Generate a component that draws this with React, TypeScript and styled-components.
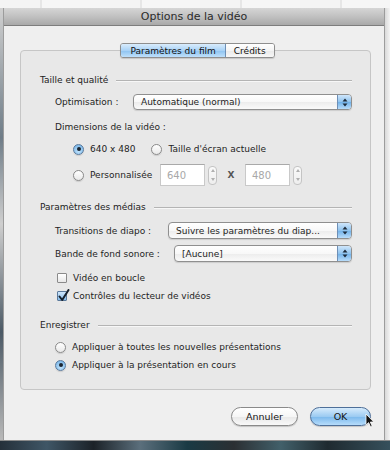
import React from "react";
import styled, { createGlobalStyle, css } from "styled-components";

const Global = createGlobalStyle`
  html, body { margin: 0; padding: 0; }
  body { font-family: "DejaVu Sans", "Liberation Sans", sans-serif; font-size: 9px; color: #1e1e1e; }
  * { box-sizing: border-box; }
`;

const Desktop = styled.div`
  position: relative;
  width: 390px;
  height: 450px;
  overflow: hidden;
  display: flex;
  flex-direction: column;
  background: #f2f2f2;
`;

const TopStrip = styled.div`
  height: 8px;
  flex: none;
  background: repeating-linear-gradient(90deg, #f4f4f4 0 40px, #e6e6e6 40px 42px, #f6f6f6 42px 100px);
`;

const MiddleRow = styled.div`
  display: flex;
  flex: 1;
`;

const LeftEdge = styled.div`
  width: 3px;
  flex: none;
  background: linear-gradient(180deg, #d0d0d0, #6f7d88 30%, #cfcfcf 50%, #4c5a66 75%, #b9b9b9);
`;

const RightEdge = styled.div`
  flex: 1;
  background: linear-gradient(90deg, #d9d9d9, #f4f4f4);
`;

const BottomStrip = styled.div`
  height: 10px;
  flex: none;
  background: linear-gradient(90deg, #25303a 0, #3f5666 12%, #1c2228 24%, #5b6f7c 36%, #1a3a44 48%, #2b2f33 60%, #42606a 72%, #1f2a30 84%, #36505c 100%);
  border-top: 1px solid #8a8a8a;
`;

const Window = styled.div`
  width: 382px;
  flex: none;
  display: flex;
  flex-direction: column;
  background: #efefef;
  border-left: 1px solid #9c9c9c;
  border-right: 1px solid #9c9c9c;
`;

const TitleBar = styled.div`
  height: 18px;
  flex: none;
  display: flex;
  align-items: center;
  justify-content: center;
  background: linear-gradient(180deg, #d6d6d6 0%, #c3c3c3 45%, #a9a9a9 100%);
  border-bottom: 1px solid #7d7d7d;
  font-family: "DejaVu Sans", "Liberation Sans", sans-serif;
  font-size: 11px;
  color: #2b2b2b;
`;

const Body = styled.div`
  flex: 1;
  display: flex;
  flex-direction: column;
  padding: 17px 13px 0 16px;
`;

const TabBar = styled.div`
  position: relative;
  z-index: 1;
  align-self: center;
  display: flex;
  height: 15px;
  margin-bottom: -8px;
  margin-left: 4px;
  border: 1px solid #8e8e8e;
  border-radius: 3px;
  overflow: hidden;
  box-shadow: 0 1px 1px rgba(0, 0, 0, 0.15);
`;

const Tab = styled.div<{ $active?: boolean }>`
  display: flex;
  align-items: center;
  padding: 0 8px;
  font-size: 9px;
  color: #111;
  ${(p) =>
    p.$active
      ? css`
          padding: 0 9px;
          background: linear-gradient(180deg, #d9ecfc 0%, #a9d2f6 50%, #8cc2f0 51%, #bfe0fb 100%);
          border-right: 1px solid #6d8fb5;
        `
      : css`
          background: linear-gradient(180deg, #ffffff 0%, #f4f4f4 50%, #e9e9e9 51%, #f7f7f7 100%);
        `}
`;

const GroupBox = styled.div`
  display: flex;
  flex-direction: column;
  background: #e8e8e8;
  border: 1px solid #c6c6c6;
  border-radius: 4px;
  padding: 22px 18px 17px 19px;
`;

const Row = styled.div<{ $h: number; $mt?: number; $indent?: number }>`
  display: flex;
  align-items: center;
  height: ${(p) => p.$h}px;
  margin-top: ${(p) => p.$mt ?? 0}px;
  padding-left: ${(p) => p.$indent ?? 0}px;
`;

const SectionTitle = styled.span`
  font-size: 9px;
  white-space: nowrap;
  color: #222;
`;

const Rule = styled.div`
  flex: 1;
  height: 1px;
  margin-left: 8px;
  background: #b4b4b4;
  box-shadow: 0 1px 0 #f7f7f7;
`;

const Label = styled.span<{ $w?: number }>`
  flex: none;
  width: ${(p) => (p.$w ? `${p.$w}px` : "auto")};
  white-space: nowrap;
`;

const Popup = styled.div`
  flex: 1;
  height: 100%;
  display: flex;
  align-items: stretch;
  border: 1px solid #8f8f8f;
  border-radius: 4px;
  overflow: hidden;
  background: linear-gradient(180deg, #ffffff 0%, #f8f8f8 50%, #ececec 51%, #fafafa 100%);
  box-shadow: 0 1px 1px rgba(0, 0, 0, 0.12);
`;

const PopupText = styled.span`
  flex: 1;
  display: flex;
  align-items: center;
  padding-left: 7px;
  white-space: nowrap;
  overflow: hidden;
`;

const PopupArrows = styled.span`
  width: 14px;
  flex: none;
  display: flex;
  align-items: center;
  justify-content: center;
  border-left: 1px solid #6e8fb6;
  background: linear-gradient(180deg, #cfe6fb 0%, #8fc3ee 50%, #6fb0e8 51%, #b8dcfa 100%);
`;

const Arrows = () => (
  <svg width="6" height="9" viewBox="0 0 6 9">
    <path d="M3 0.5 L5.5 3.5 H0.5 Z" fill="#1d2b3a" />
    <path d="M3 8.5 L5.5 5.5 H0.5 Z" fill="#1d2b3a" />
  </svg>
);

const RadioCircle = styled.span<{ $on?: boolean }>`
  width: 11px;
  height: 11px;
  flex: none;
  border-radius: 50%;
  display: flex;
  align-items: center;
  justify-content: center;
  border: 1px solid ${(p) => (p.$on ? "#5b7a9c" : "#8a8a8a")};
  background: ${(p) =>
    p.$on
      ? "radial-gradient(circle at 50% 70%, #bfe1fb 0%, #8ec4ef 60%, #6aa9e0 100%)"
      : "linear-gradient(180deg, #ffffff, #e9e9e9)"};
  box-shadow: 0 1px 1px rgba(0, 0, 0, 0.12);
  &::after {
    content: "";
    width: 4px;
    height: 4px;
    border-radius: 50%;
    background: #1b2530;
    display: ${(p) => (p.$on ? "block" : "none")};
  }
`;

const Choice = styled.label<{ $gap?: number; $ml?: number }>`
  display: flex;
  align-items: center;
  gap: ${(p) => p.$gap ?? 6}px;
  margin-left: ${(p) => p.$ml ?? 0}px;
  white-space: nowrap;
`;

const CheckBox = styled.span<{ $on?: boolean }>`
  position: relative;
  width: 10px;
  height: 10px;
  flex: none;
  border: 1px solid ${(p) => (p.$on ? "#5b7a9c" : "#8a8a8a")};
  border-radius: 1px;
  background: ${(p) =>
    p.$on ? "linear-gradient(180deg, #cfe6fb, #86bdec)" : "linear-gradient(180deg, #ffffff, #e8e8e8)"};
`;

const CheckMark = styled.svg`
  position: absolute;
  left: 0;
  top: -3px;
`;

const NumField = styled.div`
  width: 45px;
  height: 22px;
  flex: none;
  display: flex;
  align-items: center;
  padding-left: 6px;
  background: #ffffff;
  border: 1px solid #c9c9c9;
  border-top-color: #a9a9a9;
  color: #a8a8a8;
  font-size: 10px;
`;

const Stepper = styled.div`
  width: 9px;
  height: 19px;
  flex: none;
  margin-left: 3px;
  display: flex;
  flex-direction: column;
  align-items: center;
  justify-content: space-around;
  border: 1px solid #c4c4c4;
  border-radius: 4px;
  background: linear-gradient(180deg, #fafafa, #eeeeee);
`;

const StepArrow = styled.span<{ $down?: boolean }>`
  width: 0;
  height: 0;
  border-left: 2px solid transparent;
  border-right: 2px solid transparent;
  ${(p) => (p.$down ? "border-top: 3px solid #b0b0b0;" : "border-bottom: 3px solid #b0b0b0;")}
`;

const Times = styled.span`
  width: 28px;
  flex: none;
  text-align: center;
  color: #555;
  font-size: 9px;
  font-weight: bold;
`;

const ButtonRow = styled.div`
  display: flex;
  justify-content: flex-end;
  gap: 12px;
  margin-top: 17px;
`;

const PushButton = styled.div<{ $default?: boolean; $w: number }>`
  position: relative;
  width: ${(p) => p.$w}px;
  height: 19px;
  display: flex;
  align-items: center;
  justify-content: center;
  border-radius: 10px;
  font-size: 9.5px;
  border: 1px solid ${(p) => (p.$default ? "#4e6f99" : "#8a8a8a")};
  background: ${(p) =>
    p.$default
      ? "linear-gradient(180deg, #d6ebfc 0%, #9ccbf2 50%, #7ab8ec 51%, #b6dcfb 100%)"
      : "linear-gradient(180deg, #ffffff 0%, #f6f6f6 50%, #e8e8e8 51%, #f9f9f9 100%)"};
  box-shadow: 0 1px 1px rgba(0, 0, 0, 0.18);
  color: #151515;
`;

const Cursor = styled.svg`
  position: absolute;
  right: -5px;
  top: 5px;
`;

export default function App() {
  return (
    <>
      <Global />
      <Desktop>
        <TopStrip />
        <MiddleRow>
          <LeftEdge />
          <Window>
            <TitleBar>Options de la vidéo</TitleBar>
            <Body>
              <TabBar>
                <Tab $active>Paramètres du film</Tab>
                <Tab>Crédits</Tab>
              </TabBar>
              <GroupBox>
                <Row $h={14}>
                  <SectionTitle>Taille et qualité</SectionTitle>
                  <Rule />
                </Row>
                <Row $h={16} $mt={7} $indent={15}>
                  <Label $w={78}>Optimisation :</Label>
                  <Popup>
                    <PopupText>Automatique (normal)</PopupText>
                    <PopupArrows>
                      <Arrows />
                    </PopupArrows>
                  </Popup>
                </Row>
                <Row $h={14} $mt={10} $indent={15}>
                  <Label>Dimensions de la vidéo :</Label>
                </Row>
                <Row $h={14} $mt={8} $indent={33}>
                  <Choice>
                    <RadioCircle $on />
                    <span>640 x 480</span>
                  </Choice>
                  <Choice $ml={16}>
                    <RadioCircle />
                    <span>Taille d'écran actuelle</span>
                  </Choice>
                </Row>
                <Row $h={22} $mt={8} $indent={33}>
                  <Choice>
                    <RadioCircle />
                    <Label $w={70}>Personnalisée</Label>
                  </Choice>
                  <NumField>640</NumField>
                  <Stepper>
                    <StepArrow />
                    <StepArrow $down />
                  </Stepper>
                  <Times>X</Times>
                  <NumField>480</NumField>
                  <Stepper>
                    <StepArrow />
                    <StepArrow $down />
                  </Stepper>
                </Row>
                <Row $h={14} $mt={14}>
                  <SectionTitle>Paramètres des médias</SectionTitle>
                  <Rule />
                </Row>
                <Row $h={17} $mt={8} $indent={15}>
                  <Label $w={113}>Transitions de diapo :</Label>
                  <Popup>
                    <PopupText>Suivre les paramètres du diap...</PopupText>
                    <PopupArrows>
                      <Arrows />
                    </PopupArrows>
                  </Popup>
                </Row>
                <Row $h={17} $mt={6} $indent={15}>
                  <Label $w={119}>Bande de fond sonore :</Label>
                  <Popup>
                    <PopupText>[Aucune]</PopupText>
                    <PopupArrows>
                      <Arrows />
                    </PopupArrows>
                  </Popup>
                </Row>
                <Row $h={14} $mt={9} $indent={17}>
                  <Choice $gap={6}>
                    <CheckBox />
                    <span>Vidéo en boucle</span>
                  </Choice>
                </Row>
                <Row $h={14} $mt={4} $indent={17}>
                  <Choice $gap={6}>
                    <CheckBox $on>
                      <CheckMark width="12" height="13" viewBox="0 0 12 13">
                        <path d="M1.5 7.5 L4.2 11 L10.5 1" stroke="#16202c" strokeWidth="2" fill="none" strokeLinecap="round" strokeLinejoin="round" />
                      </CheckMark>
                    </CheckBox>
                    <span>Contrôles du lecteur de vidéos</span>
                  </Choice>
                </Row>
                <Row $h={14} $mt={15}>
                  <SectionTitle>Enregistrer</SectionTitle>
                  <Rule />
                </Row>
                <Row $h={14} $mt={8} $indent={15}>
                  <Choice>
                    <RadioCircle />
                    <span>Appliquer à toutes les nouvelles présentations</span>
                  </Choice>
                </Row>
                <Row $h={14} $mt={4} $indent={15}>
                  <Choice>
                    <RadioCircle $on />
                    <span>Appliquer à la présentation en cours</span>
                  </Choice>
                </Row>
              </GroupBox>
              <ButtonRow>
                <PushButton $w={67}>Annuler</PushButton>
                <PushButton $w={61} $default>
                  OK
                  <Cursor width="10" height="15" viewBox="0 0 10 15">
                    <path d="M1 1 L1 12 L3.6 9.6 L5.6 14 L7.2 13.3 L5.3 9 L8.8 9 Z" fill="#111" stroke="#fff" strokeWidth="0.8" />
                  </Cursor>
                </PushButton>
              </ButtonRow>
            </Body>
          </Window>
          <RightEdge />
        </MiddleRow>
        <BottomStrip />
      </Desktop>
    </>
  );
}
